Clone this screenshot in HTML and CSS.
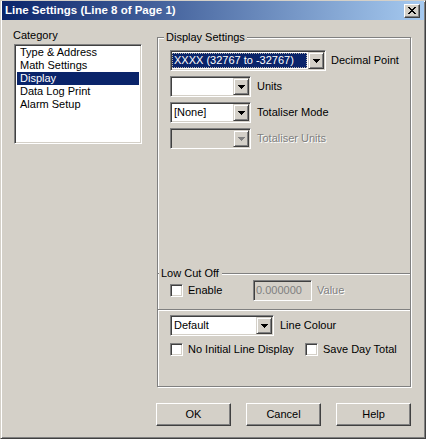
FILE: index.html
```html
<!DOCTYPE html>
<html lang="en">
<head>
  <meta charset="UTF-8" />
  <title>Line Settings</title>
  <link rel="stylesheet" href="styles.css">
</head>
<body>
  <div class="window">
    <div class="titlebar">
      <span class="title">Line Settings (Line 8 of Page 1)</span>
      <button class="close" type="button">
        <svg width="8" height="7" viewBox="0 0 8 7" shape-rendering="crispEdges">
          <path d="M0 0h2v1H0zM6 0h2v1H6zM1 1h2v1H1zM5 1h2v1H5zM2 2h4v1H2zM3 3h2v1H3zM2 4h4v1H2zM1 5h2v1H1zM5 5h2v1H5zM0 6h2v1H0zM6 6h2v1H6z"/>
        </svg>
      </button>
    </div>

    <div class="content">
      <div class="category">
        <div class="caption">Category</div>
        <ul class="listbox">
          <li>Type &amp; Address</li>
          <li>Math Settings</li>
          <li class="selected">Display</li>
          <li>Data Log Print</li>
          <li>Alarm Setup</li>
        </ul>
      </div>

      <div class="main">
        <div class="group">
          <span class="group-label">Display Settings</span>

          <div class="rows">
            <div class="row first">
              <div class="combo wide">
                <span class="value"><span class="picked">XXXX (32767 to -32767)</span></span>
                <span class="arrow"><svg width="7" height="4" viewBox="0 0 7 4" shape-rendering="crispEdges"><path d="M0 0h7v1H0zM1 1h5v1H1zM2 2h3v1H2zM3 3h1v1H3z"/></svg></span>
              </div>
              <span>Decimal Point</span>
            </div>
            <div class="row">
              <div class="combo">
                <span class="value"></span>
                <span class="arrow"><svg width="7" height="4" viewBox="0 0 7 4" shape-rendering="crispEdges"><path d="M0 0h7v1H0zM1 1h5v1H1zM2 2h3v1H2zM3 3h1v1H3z"/></svg></span>
              </div>
              <span>Units</span>
            </div>
            <div class="row">
              <div class="combo">
                <span class="value">[None]</span>
                <span class="arrow"><svg width="7" height="4" viewBox="0 0 7 4" shape-rendering="crispEdges"><path d="M0 0h7v1H0zM1 1h5v1H1zM2 2h3v1H2zM3 3h1v1H3z"/></svg></span>
              </div>
              <span>Totaliser Mode</span>
            </div>
            <div class="row">
              <div class="combo disabled">
                <span class="value"></span>
                <span class="arrow"><svg width="7" height="4" viewBox="0 0 7 4" shape-rendering="crispEdges"><path d="M0 0h7v1H0zM1 1h5v1H1zM2 2h3v1H2zM3 3h1v1H3z"/></svg></span>
              </div>
              <span class="dim">Totaliser Units</span>
            </div>
          </div>

          <div class="subgroup">
            <span class="group-label sub">Low Cut Off</span>
            <div class="cut-row">
              <label class="check enable"><span class="box"></span>Enable</label>
              <div class="textbox">0.000000</div>
              <span class="dim">Value</span>
            </div>
          </div>

          <div class="colour">
            <div class="row">
              <div class="combo medium">
                <span class="value">Default</span>
                <span class="arrow"><svg width="7" height="4" viewBox="0 0 7 4" shape-rendering="crispEdges"><path d="M0 0h7v1H0zM1 1h5v1H1zM2 2h3v1H2zM3 3h1v1H3z"/></svg></span>
              </div>
              <span>Line Colour</span>
            </div>
            <div class="checks">
              <label class="check first-check"><span class="box"></span>No Initial Line Display</label>
              <label class="check"><span class="box"></span>Save Day Total</label>
            </div>
          </div>
        </div>

        <div class="buttons">
          <button type="button" class="btn">OK</button>
          <button type="button" class="btn">Cancel</button>
          <button type="button" class="btn">Help</button>
        </div>
      </div>
    </div>
  </div>
</body>
</html>
```

FILE: styles.css
```css
body {
  margin: 0;
  background: #d4d0c8;
  font-family: "Liberation Sans", Arial, sans-serif;
  font-size: 11px;
  line-height: 13px;
  color: #000;
}
.window {
  width: 426px;
  height: 439px;
  box-sizing: border-box;
  background: #d4d0c8;
  border: 1px solid;
  border-color: #d4d0c8 #404040 #404040 #d4d0c8;
  box-shadow: inset 1px 1px #fff, inset -1px -1px #808080;
  padding: 0 1px 1px 1px;
}
.titlebar {
  height: 19px;
  display: flex;
  align-items: center;
  justify-content: space-between;
  padding-left: 3px;
  background: linear-gradient(to right, #0a246a, #a6caf0);
}
.title {
  color: #fff;
  font-weight: bold;
  font-size: 11.5px;
}
.close {
  width: 16px;
  height: 14px;
  margin-right: 4px;
  padding: 0;
  display: flex;
  align-items: center;
  justify-content: center;
  background: #d4d0c8;
  border: 1px solid;
  border-color: #fff #404040 #404040 #fff;
  box-shadow: inset -1px -1px #808080;
}
.content {
  display: flex;
  padding: 9px 0 0 11px;
  gap: 14px;
}
.category {
  width: 129px;
}
.caption {
  height: 13px;
  margin-bottom: 2px;
}
.listbox {
  list-style: none;
  margin: 0 0 0 1px;
  padding: 1px 2px;
  width: 128px;
  height: 100px;
  box-sizing: border-box;
  background: #fff;
  border: 1px solid;
  border-color: #808080 #fff #fff #808080;
  box-shadow: inset 1px 1px #404040, inset -1px -1px #d4d0c8;
}
.listbox li {
  padding-left: 3px;
  height: 13px;
}
.listbox .selected {
  background: #0a246a;
  color: #fff;
}
.main {
  width: 255px;
  padding-top: 8px;
}
.group {
  margin-left: 1px;
  width: 254px;
  height: 350px;
  box-sizing: border-box;
  border: 1px solid #808080;
  box-shadow: inset 1px 1px #fff, 1px 1px #fff;
  display: flex;
  flex-direction: column;
}
.group-label {
  align-self: flex-start;
  margin: -7px 0 0 6px;
  padding: 0 2px;
  background: #d4d0c8;
}
.group-label.sub {
  margin-left: 1px;
  padding: 0 3px 0 2px;
}
.rows {
  margin-top: 6px;
  padding-left: 12px;
  display: flex;
  flex-direction: column;
  gap: 5px;
}
.row {
  display: flex;
  align-items: center;
  gap: 6px;
}
.row.first {
  gap: 5px;
}
.combo {
  width: 81px;
  height: 21px;
  box-sizing: border-box;
  display: flex;
  padding: 1px;
  background: #fff;
  border: 1px solid;
  border-color: #808080 #fff #fff #808080;
  box-shadow: inset 1px 1px #404040, inset -1px -1px #d4d0c8;
}
.combo.wide {
  width: 156px;
}
.combo.medium {
  width: 104px;
}
.combo.disabled {
  background: #d4d0c8;
}
.combo .value {
  flex: 1;
  display: flex;
  align-items: center;
  padding-left: 2px;
  overflow: hidden;
  white-space: nowrap;
}
.combo.wide .value {
  padding: 1px 1px 1px 0;
}
.picked {
  flex: 1;
  height: 15px;
  box-sizing: border-box;
  padding-left: 1px;
  line-height: 13px;
  background: #0a246a;
  color: #fff;
  border: 1px dotted #b8b4ac;
}
.arrow {
  width: 16px;
  box-sizing: border-box;
  display: flex;
  align-items: center;
  justify-content: center;
  background: #d4d0c8;
  border: 1px solid;
  border-color: #d4d0c8 #404040 #404040 #d4d0c8;
  box-shadow: inset 1px 1px #fff, inset -1px -1px #808080;
}
.disabled .arrow svg {
  fill: #808080;
}
.dim {
  color: #808080;
  text-shadow: 1px 1px #fff;
}
.subgroup {
  margin-top: auto;
  border-top: 1px solid #808080;
  border-bottom: 1px solid #808080;
  box-shadow: inset 0 1px #fff, 0 1px #fff;
  display: flex;
  flex-direction: column;
  padding-bottom: 8px;
}
.cut-row {
  display: flex;
  align-items: center;
  padding-left: 12px;
  height: 21px;
}
.check {
  display: flex;
  align-items: center;
  gap: 5px;
}
.check.enable {
  width: 83px;
}
.box {
  width: 13px;
  height: 13px;
  box-sizing: border-box;
  background: #fff;
  border: 1px solid;
  border-color: #808080 #fff #fff #808080;
  box-shadow: inset 1px 1px #404040, inset -1px -1px #d4d0c8;
}
.textbox {
  width: 59px;
  height: 21px;
  box-sizing: border-box;
  padding: 3px 0 0 2px;
  margin-right: 5px;
  color: #808080;
  border: 1px solid;
  border-color: #808080 #fff #fff #808080;
  box-shadow: inset 1px 1px #404040, inset -1px -1px #d4d0c8;
}
.colour {
  height: 76px;
  box-sizing: border-box;
  padding: 5px 0 0 12px;
}
.checks {
  display: flex;
  margin-top: 7px;
}
.check.first-check {
  width: 135px;
}
.buttons {
  display: flex;
  gap: 15px;
  margin-top: 16px;
}
.btn {
  width: 75px;
  height: 23px;
  padding: 0;
  font: inherit;
  color: #000;
  background: #d4d0c8;
  border: 1px solid;
  border-color: #fff #404040 #404040 #fff;
  box-shadow: inset -1px -1px #808080;
}
```
